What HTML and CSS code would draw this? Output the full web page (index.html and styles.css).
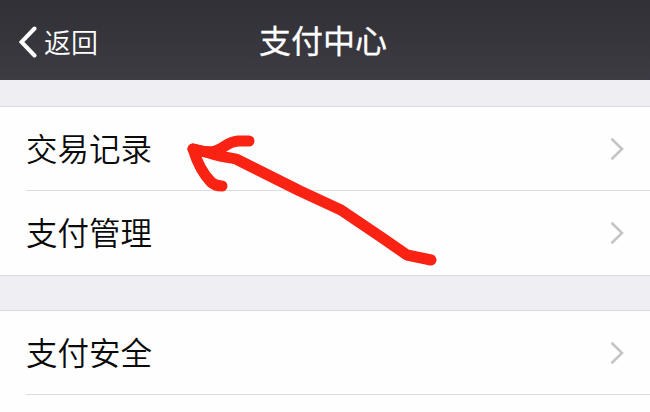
FILE: index.html
```
<!DOCTYPE html>
<html lang="zh-CN">
<head>
    <meta charset="UTF-8">
    <meta name="viewport" content="width=device-width, initial-scale=1.0">
    <title>支付中心</title>
    <link rel="stylesheet" href="styles.css">
</head>
<body>
    <header class="navbar">
        <a class="back">
            <svg class="back-icon" width="18" height="32" viewBox="0 0 18 32">
                <path d="M15.5 2.5L2.5 16L15.5 29.5" />
            </svg>
            <span>返回</span>
        </a>
        <h1>支付中心</h1>
    </header>

    <main>
        <ul class="group">
            <li class="row">
                <span>交易记录</span>
                <svg class="chevron" width="14" height="24" viewBox="0 0 14 24">
                    <path d="M1.5 1.8L12 12L1.5 22.2" />
                </svg>
            </li>
            <li class="row">
                <span>支付管理</span>
                <svg class="chevron" width="14" height="24" viewBox="0 0 14 24">
                    <path d="M1.5 1.8L12 12L1.5 22.2" />
                </svg>
            </li>
        </ul>
        <ul class="group group-last">
            <li class="row">
                <span>支付安全</span>
                <svg class="chevron" width="14" height="24" viewBox="0 0 14 24">
                    <path d="M1.5 1.8L12 12L1.5 22.2" />
                </svg>
            </li>
            <li class="row row-empty"></li>
        </ul>
    </main>

    <!-- hand-drawn arrow pointing at the first row -->
    <svg class="arrow" width="650" height="412" viewBox="0 0 650 412">
        <path d="M431 260L407 255L381 237L341 210L300 191L236 159C228 157 219 157 209 153L193 149" />
        <path d="M249 141H238C226 142 224 149 215 151C208 153 200 151 193 149C197 162 204 175 211 182C214 185 217 186 222 186" />
        <path class="arrow-fill" d="M194 147L214 150L223 149L224 154L236 158L205 154Z" />
    </svg>
</body>
</html>
```

FILE: styles.css
```
body {
    font-family: "Noto Sans CJK SC", "Noto Sans", sans-serif;
    margin: 0;
    height: 412px;
    overflow: hidden;
    position: relative;
    background: #efeef3;
    color: #0a0a0a;
}
.navbar {
    display: grid;
    grid-template-columns: 1fr auto 1fr;
    align-items: center;
    height: 80px;
    padding: 0 3px 0 19px;
    box-sizing: border-box;
    background: linear-gradient(#313036, #3d3b43);
    color: #fff;
}
.navbar h1 {
    margin: 0 20px 0 0;
    font-size: 32px;
    line-height: 78px;
    height: 80px;
    font-weight: 400;
    -webkit-text-stroke: 0.3px #fff;
}
.back {
    display: flex;
    align-items: center;
    gap: 7px;
    padding-top: 4px;
    font-size: 27px;
    line-height: 40px;
    font-weight: 350;
}
.back-icon {
    fill: none;
    stroke: #fff;
    stroke-width: 4;
    stroke-linecap: round;
}
.group {
    list-style: none;
    margin: 26px 0 0;
    padding: 0 0 0 26px;
    background: #fefefe;
    border-top: 1px solid #dad9df;
    border-bottom: 1px solid #dad9df;
}
.group-last {
    margin-top: 34px;
    border-bottom: none;
}
.row {
    display: flex;
    justify-content: space-between;
    align-items: center;
    height: 83px;
    padding-right: 26px;
    font-size: 31.5px;
    line-height: 40px;
    font-weight: 350;
}
.row span {
    padding-bottom: 4px;
}
.row + .row {
    height: 84px;
    border-top: 1px solid #dddce0;
}
.row + .row-empty {
    height: 17px;
}
.chevron {
    fill: none;
    stroke: #c5c5c8;
    stroke-width: 2.6;
}
.arrow {
    position: absolute;
    top: 0;
    left: 0;
    fill: none;
    stroke: #fa2213;
    stroke-width: 11;
    stroke-linecap: round;
    stroke-linejoin: round;
    pointer-events: none;
}
.arrow-fill {
    fill: #fa2213;
    stroke-width: 5;
}
```
